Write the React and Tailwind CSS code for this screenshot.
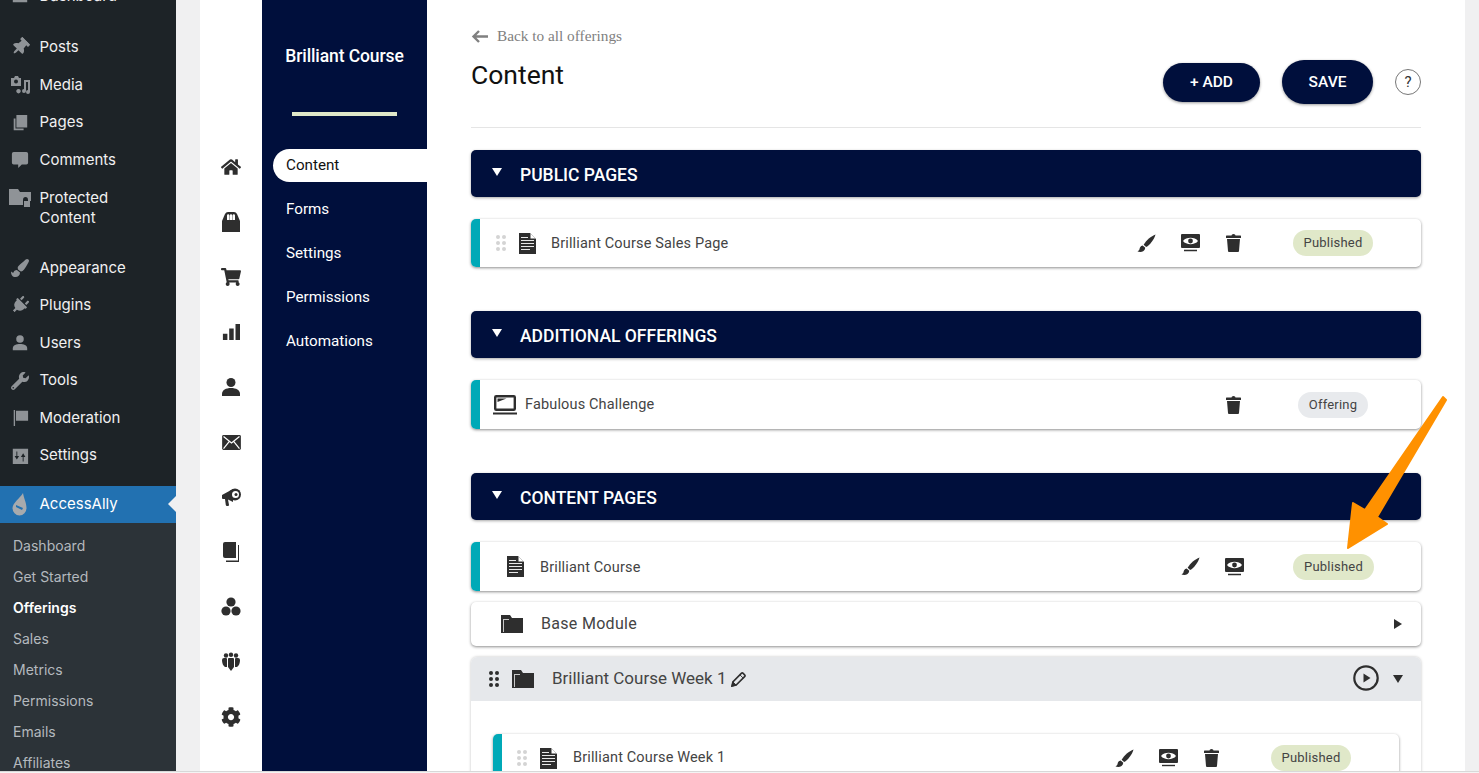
import React from "react";
import { FaShoppingCart, FaCog, FaHome, FaThumbtack, FaWrench, FaPlug, FaPaintBrush } from "react-icons/fa";

const Doc = ({ c = "" }) => (
  <svg viewBox="0 0 17 21" className={"w-[17px] h-[21px] " + c}>
    <path d="M0 0h11l6 6v15H0z" fill="#2e2e2e" />
    <path d="M11.5 0.5v5h5" fill="#fff" />
    <path d="M2 4h7v1H2zM2 7h13v1H2zM2 10h13v1H2zM2 13h13v1H2zM2 16h9v1H2z" fill="#e8e8e8" />
  </svg>
);
const Folder = ({ c = "" }) => (
  <svg viewBox="0 0 22 18" className={"w-[22px] h-[18px] " + c}>
    <path d="M0 0h9l2 3h11v15H0z" fill="#2e2e2e" />
    <path d="M2 17V4h6v1H3v12z" fill="#c8c8c8" />
  </svg>
);
const Brush = () => (
  <svg viewBox="0 0 20 20" className="w-[19px] h-[19px]">
    <path d="M19.5 .5C15 2 9.5 7 7 11.2l2.6 2.6C13.6 11.5 18.2 5.5 19.5.5Z" fill="#2e2e2e" />
    <path d="M6 12.2c-2.6.2-3 2.4-3.4 3.8-.3 1-1.2 1.8-2.1 2.5 3.4 1.2 7.700.4 8.200-3.900Z" fill="#2e2e2e" />
  </svg>
);
const EyeMon = () => (
  <svg viewBox="0 0 19 18" className="w-[19px] h-[18px]">
    <rect x="0" y="0" width="19" height="14" rx="1" fill="#2e2e2e" />
    <path d="M2 7C5 2.800 14 2.800 17 7 14 11.200 5 11.200 2 7Z" fill="#fff" />
    <circle cx="9.500" cy="7" r="2.400" fill="#2e2e2e" />
    <path d="M3 15.800h13v1.400H3z" fill="#2e2e2e" />
  </svg>
);
const Trash = () => (
  <svg viewBox="0 0 15 18" className="w-[15px] h-[18px] -translate-x-[1px]">
    <path d="M5.500 1.500Q5.500 0 7.500 0t2 1.500H14.500q.5 0 .5 1V4H0V2.500q0-1 .5-1z" fill="#2e2e2e" />
    <path d="M1 5h13l-1 12q0 1-1 1H3q-1 0-1-1z" fill="#2e2e2e" />
  </svg>
);
const Dots = ({ color, c = "" }) => (
  <div className={"grid grid-cols-2 gap-x-[2px] gap-y-[2px] w-[10px] " + c}>
    {[0, 1, 2, 3, 4, 5].map((i) => (
      <span key={i} className={"w-[4px] h-[4px] rounded-full " + color} />
    ))}
  </div>
);
const Caret = ({ c = "" }) => (
  <svg viewBox="0 0 10 8" className={"w-[10px] h-[8px] " + c}><path d="M0 0h10L5 8z" fill="currentColor" /></svg>
);
const Badge = ({ children, gray, w = "w-[80px]" }) => (
  <span className={"h-[26px] rounded-full flex items-center justify-center text-[13px] text-[#444] tracking-[0.2px] " + w + " " + (gray ? "bg-[#e8eaed]" : "bg-[#e0e8c9]")}>{children}</span>
);
const Slot = ({ children }) => <span className="w-[44px] flex justify-center">{children}</span>;

const Header = ({ title }) => (
  <div className="h-[47px] bg-[#000f3c] rounded-[5px] shadow-[0_1px_3px_rgba(0,0,0,0.35)] flex items-center text-white">
    <Caret c="ml-[21px] mr-[18px] -translate-y-[2px]" />
    <span className="text-[17.5px] font-medium leading-none translate-y-[2px]">{title}</span>
  </div>
);

const Row = ({ h = "h-[48px]", children, right }) => (
  <div className={"flex items-stretch rounded-[5px] bg-white shadow-[0_1px_3px_rgba(0,0,0,0.45)] overflow-hidden " + h}>
    <span className="w-[9px] bg-[#00a9b7] shrink-0" />
    <div className="flex-1 flex items-center text-[14.500px] text-[#444] tracking-[0.15px]">
      {children}
      <div className="ml-auto flex items-center">{right}</div>
    </div>
  </div>
);

const wpIcon = "w-[18px] h-[18px] text-[#8f9397]";
const wpTop = [
  ["Dashboard", <svg viewBox="0 0 20 20" className={wpIcon}><path d="M2 14a8 8 0 0 1 16 0v3H2z" fill="currentColor" /></svg>, "mb-[14px]"],
  ["Posts", <FaThumbtack className={wpIcon + " rotate-[45deg]"} />, ""],
  ["Media", <svg viewBox="0 0 20 20" className="w-[20px] h-[20px] text-[#8f9397]"><path d="M1 3h3l1-2h3l1 2h2v8H1z M4 6.500a2 2 0 1 0 4 0 2 2 0 0 0-4 0z M14 5h6v12a2 2 0 1 1-2-2V7h-2v9a2 2 0 1 1-2-2z M8.500 14a2.200 2.200 0 1 0 .01 0z" fill="currentColor" fillRule="evenodd" /></svg>, ""],
  ["Pages", <svg viewBox="0 0 20 20" className={wpIcon}><path d="M6 1h12v14H6z M3 5h2v11h9v2H3z" fill="currentColor" /></svg>, ""],
  ["Comments", <svg viewBox="0 0 20 20" className={wpIcon}><path d="M3 1h14q2 0 2 2v10q0 2-2 2h-5l-4 4v-4H3q-2 0-2-2V3q0-2 2-2z" fill="currentColor" /></svg>, ""],
];
const wpMid = [
  ["Appearance", <FaPaintBrush className={wpIcon} />],
  ["Plugins", <FaPlug className={wpIcon + " rotate-[45deg]"} />],
  ["Users", <svg viewBox="0 0 20 20" className={wpIcon}><circle cx="10" cy="5.500" r="4.200" fill="currentColor" /><path d="M2 18v-2c0-4 4-5 8-5s8 1 8 5v2z" fill="currentColor" /></svg>],
  ["Tools", <FaWrench className={wpIcon} />],
  ["Moderation", <svg viewBox="0 0 20 20" className={wpIcon}><path d="M3 1h1.500v18H3z M5.500 2H19v11H5.500z" fill="currentColor" /></svg>],
  ["Settings", <svg viewBox="0 0 20 20" className={wpIcon}><path d="M2 2h17v17H2zM6 5v5H4l2.500 4L9 10H7V5zM14 16v-5h2l-2.500-4L11 11h2v5z" fill="currentColor" fillRule="evenodd" /></svg>],
];
const WpItem = ({ label, icon, c = "" }) => (
  <div className={"h-[37.600px] flex items-center text-[15px] text-[#f0f0f1] " + c}>
    <span className="w-[39.500px] flex justify-center shrink-0">{icon}</span>
    {label}
  </div>
);

const railC = "w-[20px] h-[20px] text-[#2e2e2e]";
const rail = [
  <FaHome className={railC} />,
  <svg viewBox="0 0 20 20" className={railC}><path d="M1 9 4 2q1-2 3-2h6q2 0 3 2l3 7v11H1z" fill="currentColor" /><path d="M6 8V3.500a1.200 1.200 0 0 1 2.400 0V8zM8.800 8V3.500a1.200 1.200 0 0 1 2.400 0V8zM11.600 8V3.500a1.200 1.200 0 0 1 2.400 0V8z" fill="#fff" /></svg>,
  <FaShoppingCart className={railC} />,
  <svg viewBox="0 0 20 20" className="w-[18px] h-[18px] text-[#2e2e2e]"><path d="M1 12h5v7H1zM8 6h5v13H8zM15 1h5v18h-5z" fill="currentColor" /></svg>,
  <svg viewBox="0 0 20 20" className={railC}><circle cx="10" cy="5.500" r="4.500" fill="currentColor" /><path d="M1 19v-2c0-4 4-6 9-6s9 2 9 6v2z" fill="currentColor" /></svg>,
  <svg viewBox="0 0 20 16" className="w-[19px] h-[15px] text-[#2e2e2e]"><rect width="20" height="16" rx="1.500" fill="currentColor" /><path d="M1.500 1.500 10 8.500l8.500-7M1.500 14.500 7.500 7M18.500 14.500 12.500 7" stroke="#fff" strokeWidth="1.300" fill="none" /></svg>,
  <svg viewBox="0 0 20 20" className={railC}><path d="M1 8l11-6v13l-5-2.500L8 18q0 1-1 1H6q-1 0-1.200-1L4 12H2q-1 0-1-1z" fill="currentColor" /><circle cx="14" cy="7.500" r="6" fill="currentColor" /><circle cx="14.500" cy="7.500" r="3.500" fill="#fff" /><circle cx="15" cy="7.500" r="1.500" fill="currentColor" /></svg>,
  <svg viewBox="0 0 20 20" className={railC}><path d="M2 2q0-2 2-2h11v16H4q-2 0-2-2z" fill="currentColor" /><path d="M17 3h1v17H5v-1.500h12z" fill="currentColor" /></svg>,
  <svg viewBox="0 0 20 20" className={railC}><circle cx="10" cy="5" r="4.600" fill="currentColor" /><circle cx="5" cy="14" r="4.600" fill="currentColor" /><circle cx="15" cy="14" r="4.600" fill="currentColor" /></svg>,
  <svg viewBox="0 0 20 20" className={railC}><circle cx="5" cy="3.500" r="2.200" fill="currentColor" /><circle cx="10" cy="2.800" r="2.200" fill="currentColor" /><circle cx="15" cy="3.500" r="2.200" fill="currentColor" /><path d="M1 8q0-2 2-2h2q1 0 1 1v8H4q-3-2-3-7zM19 8q0-2-2-2h-2q-1 0-1 1v8h2q3-2 3-7zM7 7q0-1 1-1h4q1 0 1 1v8l-3 4-3-4z" fill="currentColor" /></svg>,
  <FaCog className={railC} />,
];

const Actions = () => (
  <>
    <Slot><Brush /></Slot>
    <Slot><EyeMon /></Slot>
  </>
);

export default function App() {
  return (
    <div className="relative h-[773px] w-full overflow-hidden flex flex-col bg-white font-['Roboto',sans-serif]">
      <div className="flex-1 min-h-0 flex">
        {/* WordPress admin menu */}
        <aside className="w-[176px] shrink-0 bg-[#1d2327] font-['Inter',sans-serif] overflow-hidden">
          <div className="-mt-[23px]">
            {wpTop.map(([l, i, c]) => <WpItem key={l} label={l} icon={i} c={c} />)}
            <div className="flex text-[15px] leading-[20px] text-[#f0f0f1] pt-[9px] h-[70px]">
              <span className="w-[39.500px] flex justify-center shrink-0 pt-[1px]">
                <svg viewBox="0 0 22 20" className="w-[22px] h-[20px] text-[#8f9397]"><path d="M0 0h9l2 3h11v9h-3v-1q0-3-2.500-3T14 11v5H0z" fill="currentColor" /><path d="M15 12h6v6h-6z" fill="currentColor" /></svg>
              </span>
              <span>Protected<br />Content</span>
            </div>
            {wpMid.map(([l, i]) => <WpItem key={l} label={l} icon={i} />)}
            <div className="relative mt-[11px] h-[37px] bg-[#2271b1] flex items-center text-[15px] text-white">
              <span className="w-[39.500px] flex justify-center shrink-0">
                <svg viewBox="0 0 15 23" className="w-[15px] h-[23px]"><path d="M11 0c.5 4 3.500 10 3.500 15a7 7.500 0 0 1-14 0C.5 10 8 5 11 0z" fill="#a7aaad" /><path d="M4 12l7 3-1 2-6-3z" fill="#2271b1" /></svg>
              </span>
              AccessAlly
              <span className="absolute right-0 top-1/2 -translate-y-1/2 w-0 h-0 border-y-[8px] border-y-transparent border-r-[8px] border-r-[#f0f0f1]" />
            </div>
            <div className="bg-[#2c3338] pt-[7px] pb-[20px] text-[14px] text-[#b4b9be]">
              {["Dashboard", "Get Started", "Offerings", "Sales", "Metrics", "Permissions", "Emails", "Affiliates"].map((s) => (
                <div key={s} className={"h-[31px] flex items-center pl-[13px] " + (s === "Offerings" ? "font-semibold text-white" : "")}>{s}</div>
              ))}
            </div>
          </div>
        </aside>

        <div className="w-[24px] shrink-0 bg-[#f0f0f1]" />

        {/* icon rail */}
        <div className="w-[62px] shrink-0 bg-white flex flex-col items-center pt-[139.500px]">
          {rail.map((ic, i) => (
            <div key={i} className="h-[55px] shrink-0 flex items-center justify-center">{ic}</div>
          ))}
        </div>

        {/* offering nav */}
        <nav className="w-[165px] shrink-0 bg-[#000f3c] text-white flex flex-col">
          <div className="h-[112px] pt-[45px] text-center text-[17.500px] font-medium leading-[22px] tracking-[-0.1px]">Brilliant Course</div>
          <div className="h-[4px] w-[105px] ml-[30px] bg-[#e0e8c9]" />
          <div className="mt-[33px] ml-[11px] flex flex-col gap-[11px] text-[15.200px]">
            <div className="h-[33px] bg-white text-[#111] rounded-l-full flex items-center pl-[13px]">Content</div>
            {["Forms", "Settings", "Permissions", "Automations"].map((n) => (
              <div key={n} className="h-[33px] flex items-center pl-[13px]">{n}</div>
            ))}
          </div>
        </nav>

        {/* main */}
        <main className="flex-1 min-w-0 px-[44px] pt-[26px] overflow-hidden">
          <div className="flex items-center gap-[8px] h-[20px] text-[#808080] font-['Liberation_Serif',serif] text-[15.300px]">
            <svg viewBox="0 0 18 14" className="w-[18px] h-[15px] text-[#808080]"><path d="M17 7H2.500M8 1.500 2.500 7 8 12.500" fill="none" stroke="currentColor" strokeWidth="2.400" /></svg>
            Back to all offerings
          </div>
          <div className="relative h-[82px] border-b border-[#e5e5e5]">
            <h1 className="pt-[12px] text-[26.500px] leading-[34px] text-[#111]">Content</h1>
            <div className="absolute right-0 top-[14px] flex items-center">
              <button className="w-[97px] h-[39px] pt-[1px] rounded-full bg-[#000f3c] text-white text-[15.500px] font-medium shadow-[0_1px_3px_rgba(0,0,0,0.4)]">+ ADD</button>
              <button className="w-[91px] h-[44px] pt-[1px] ml-[22px] rounded-full bg-[#000f3c] text-white text-[15.500px] font-medium shadow-[0_1px_3px_rgba(0,0,0,0.4)]">SAVE</button>
              <span className="w-[26px] h-[26px] ml-[22px] rounded-full border border-[#777] flex items-center justify-center text-[15px] text-[#333]">?</span>
            </div>
          </div>

          <div className="mt-[22px]"><Header title="PUBLIC PAGES" /></div>
          <div className="mt-[22px]">
            <Row right={<><Actions /><Slot><Trash /></Slot><span className="w-[37px]" /><Badge>Published</Badge><span className="w-[48px]" /></>}>
              <Dots color="bg-[#d4d4d4]" c="ml-[16px]" />
              <Doc c="ml-[13px]" />
              <span className="ml-[15px] translate-y-[1px]">Brilliant Course Sales Page</span>
            </Row>
          </div>

          <div className="mt-[44px]"><Header title="ADDITIONAL OFFERINGS" /></div>
          <div className="mt-[22px]">
            <Row h="h-[49px]" right={<><Slot /><Slot /><Slot><Trash /></Slot><span className="w-[42px]" /><Badge gray w="w-[70px]">Offering</Badge><span className="w-[53px]" /></>}>
              <svg viewBox="0 0 24 20" className="w-[24px] h-[20px] ml-[13px]">
                <rect x="2.200" y="1.200" width="19.600" height="13.600" rx="1" fill="none" stroke="#2e2e2e" strokeWidth="2.400" />
                <path d="M4.500 3.500h9l-9 3.500z" fill="#2e2e2e" />
                <path d="M0 17.500h24v2H0z" fill="#2e2e2e" />
              </svg>
              <span className="ml-[8px]">Fabulous Challenge</span>
            </Row>
          </div>

          <div className="mt-[44px]"><Header title="CONTENT PAGES" /></div>
          <div className="mt-[22px]">
            <Row h="h-[49px]" right={<><Slot /><Actions /><span className="w-[37px]" /><Badge w="w-[81px]">Published</Badge><span className="w-[47px]" /></>}>
              <Doc c="ml-[27px]" />
              <span className="ml-[16px] translate-y-[1px]">Brilliant Course</span>
            </Row>
          </div>

          <div className="mt-[11px] h-[44px] rounded-[5px] bg-white shadow-[0_1px_3px_rgba(0,0,0,0.45)] flex items-center text-[16px] text-[#444] tracking-[0.3px]">
            <Folder c="ml-[30px]" />
            <span className="ml-[18px]">Base Module</span>
            <svg viewBox="0 0 8 10" className="w-[8px] h-[10px] ml-auto mr-[19px] text-[#2e2e2e]"><path d="M0 0l8 5-8 5z" fill="currentColor" /></svg>
          </div>

          <div className="mt-[11px] rounded-t-[6px] bg-white shadow-[0_0_3px_rgba(0,0,0,0.25)]">
            <div className="h-[44px] rounded-t-[6px] bg-[#e6e8eb] flex items-center text-[17px] text-[#444]">
              <Dots color="bg-[#2e2e2e]" c="ml-[18px]" />
              <Folder c="ml-[13px]" />
              <span className="ml-[18px]">Brilliant Course Week 1</span>
              <svg viewBox="0 0 16 16" className="w-[15px] h-[15px] ml-[5px]"><path d="M1 15l1-4.500L11 1.500q1-1 2 0l1.500 1.500q1 1 0 2L5.500 14z" fill="none" stroke="#2e2e2e" strokeWidth="1.700" /><path d="M2 10.500 5.500 14 1 15zM9.500 3l3.500 3.500" fill="#2e2e2e" stroke="#2e2e2e" /></svg>
              <svg viewBox="0 0 26 26" className="w-[26px] h-[26px] ml-auto mr-[14px] -translate-y-[1px]"><circle cx="13" cy="13" r="11.700" fill="none" stroke="#2e2e2e" strokeWidth="2.200" /><path d="M10.500 8.500l7 4.500-7 4.500z" fill="#2e2e2e" /></svg>
              <Caret c="mr-[18px] text-[#2e2e2e]" />
            </div>
            <div className="pt-[33px] pl-[22px] pr-[22px] pb-[20px]">
              <Row right={<><Actions /><Slot><Trash /></Slot><span className="w-[37px]" /><Badge>Published</Badge><span className="w-[48px]" /></>}>
                <Dots color="bg-[#d4d4d4]" c="ml-[15px]" />
                <Doc c="ml-[13px]" />
                <span className="ml-[16px]">Brilliant Course Week 1</span>
              </Row>
            </div>
          </div>
        </main>

        <div className="w-[14px] shrink-0 bg-[#f0f0f1]" />
      </div>
      <div className="h-[2px] shrink-0 bg-[#f4f4f4] border-t border-[#d8d8d8]" />

      {/* annotation arrow over the page */}
      <svg viewBox="0 0 1479 773" className="absolute inset-0 w-[1479px] h-[773px] pointer-events-none">
        <path d="M1443 397 1446 400 1377 517 1387 524 1348 548 1353 503 1365 510Z" fill="#ff9100" stroke="#ff9100" strokeWidth="2" strokeLinejoin="round" />
      </svg>
    </div>
  );
}
